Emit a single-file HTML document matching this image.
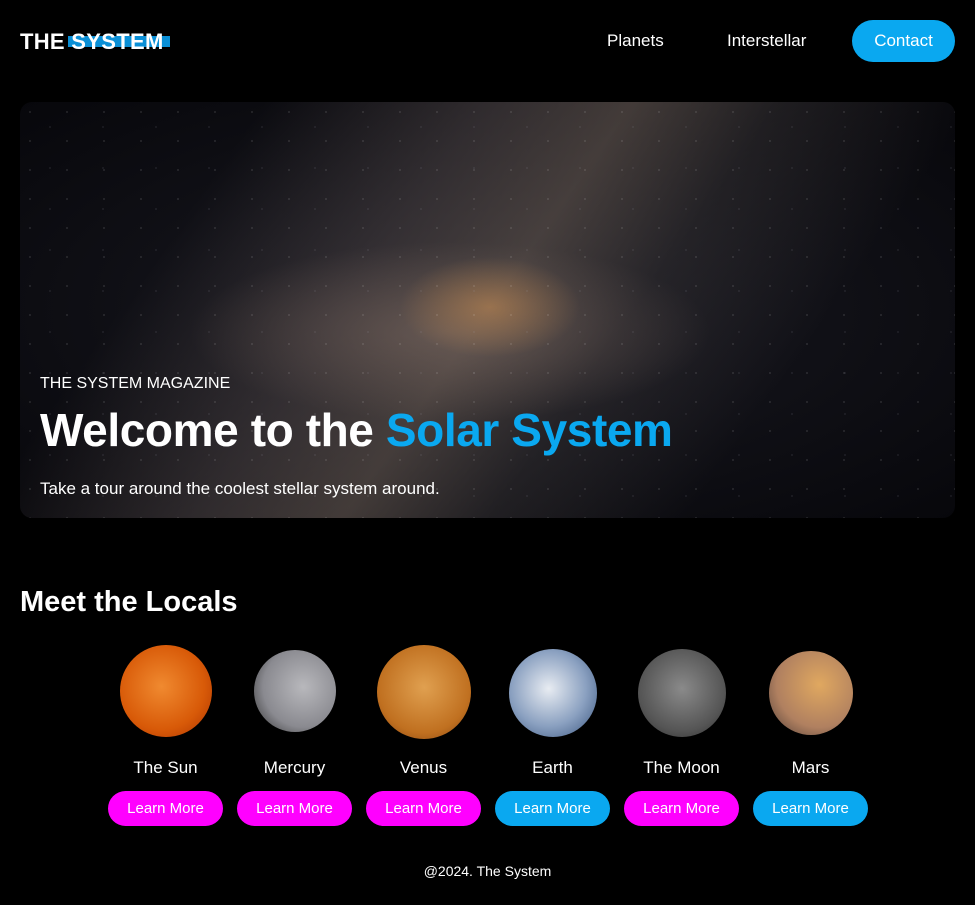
<!DOCTYPE html>
<html><head><meta charset="utf-8"><style>
*{margin:0;padding:0;box-sizing:border-box}
body{width:975px;height:905px;background:#000;color:#fff;font-family:"Liberation Sans",sans-serif;position:relative;overflow:hidden}
.logo{position:absolute;left:20px;top:29px;font-weight:bold;font-size:22px;letter-spacing:0.3px}
.logo .bar{position:absolute;left:48px;top:7px;width:102px;height:11px;background:#0a8fd6;z-index:0}
.logo span{position:relative;z-index:1}
.nav{position:absolute;top:20px;height:42px;line-height:42px;font-size:17px}
.contact{left:852px;width:103px;background:#0aa8f0;border-radius:21px;text-align:center}
.hero{position:absolute;left:20px;top:102px;width:935px;height:416px;border-radius:12px;overflow:hidden;
background:
radial-gradient(ellipse 90px 50px at 470px 205px,rgba(200,140,80,.55),transparent),
radial-gradient(ellipse 260px 90px at 430px 230px,rgba(130,110,100,.55),transparent),
linear-gradient(125deg,transparent 20%,rgba(90,80,80,.45) 38%,rgba(120,105,95,.5) 50%,rgba(70,65,65,.35) 62%,transparent 78%),
radial-gradient(ellipse at 50% 50%,#1a1a22,#07070b);}
.hero .stars{position:absolute;inset:0;background-image:radial-gradient(1px 1px at 10px 10px,#fff,transparent),radial-gradient(1px 1px at 30px 25px,#aab,transparent);background-size:37px 29px,53px 41px;opacity:.35}
.hero .t1{position:absolute;left:20px;top:273px;font-size:16px}
.hero h1{position:absolute;left:20px;top:301px;font-size:46px;font-weight:bold;letter-spacing:-0.4px}
.hero h1 b{color:#0aa8f0}
.hero p{position:absolute;left:20px;top:377px;font-size:17px}
h2{position:absolute;left:20px;top:586px;font-size:29px;font-weight:bold}
.col{position:absolute;top:645px;width:129px;text-align:center}
.pl{width:92px;height:92px;border-radius:50%;margin:0 auto}
.name{position:absolute;top:113px;width:100%;font-size:17px}
.btn{position:absolute;top:146px;left:7px;width:115px;height:35px;line-height:35px;border-radius:18px;font-size:15px}
.m{background:#f0f}.b{background:#0aa8f0}
.foot{position:absolute;top:863px;width:100%;text-align:center;font-size:14px}
</style></head><body>
<div class="logo"><div class="bar"></div><span>THE SYSTEM</span></div>
<div class="nav" style="left:607px">Planets</div>
<div class="nav" style="left:727px">Interstellar</div>
<div class="nav contact">Contact</div>
<div class="hero"><div class="stars"></div>
<div class="t1">THE SYSTEM MAGAZINE</div>
<h1>Welcome to the <b>Solar System</b></h1>
<p>Take a tour around the coolest stellar system around.</p></div>
<h2>Meet the Locals</h2>
<div class="col" style="left:101px"><div class="pl" style="background:radial-gradient(circle at 45% 45%,#f08a30,#d85a08 60%,#a83000)"></div><div class="name">The Sun</div><div class="btn m">Learn More</div></div>
<div class="col" style="left:230px"><div class="pl" style="width:82px;height:82px;margin-top:5px;background:radial-gradient(circle at 60% 45%,#b8b8bc,#8a8a90 60%,#2a2a2a)"></div><div class="name">Mercury</div><div class="btn m">Learn More</div></div>
<div class="col" style="left:359px"><div class="pl" style="width:94px;height:94px;background:radial-gradient(circle at 50% 45%,#e0a050,#c07020 65%,#804010)"></div><div class="name">Venus</div><div class="btn m">Learn More</div></div>
<div class="col" style="left:488px"><div class="pl" style="width:88px;height:88px;margin-top:4px;background:radial-gradient(circle at 45% 45%,#e8ecf2,#8aa0c0 55%,#34507a)"></div><div class="name">Earth</div><div class="btn b">Learn More</div></div>
<div class="col" style="left:617px"><div class="pl" style="width:88px;height:88px;margin-top:4px;background:radial-gradient(circle at 50% 45%,#8a8a8a,#555 65%,#2a2a2a)"></div><div class="name">The Moon</div><div class="btn m">Learn More</div></div>
<div class="col" style="left:746px"><div class="pl" style="width:84px;height:84px;margin-top:6px;background:radial-gradient(circle at 60% 40%,#e0a860,#b08060 60%,#4a3a36)"></div><div class="name">Mars</div><div class="btn b">Learn More</div></div>
<div class="foot">@2024. The System</div>
</body></html>
